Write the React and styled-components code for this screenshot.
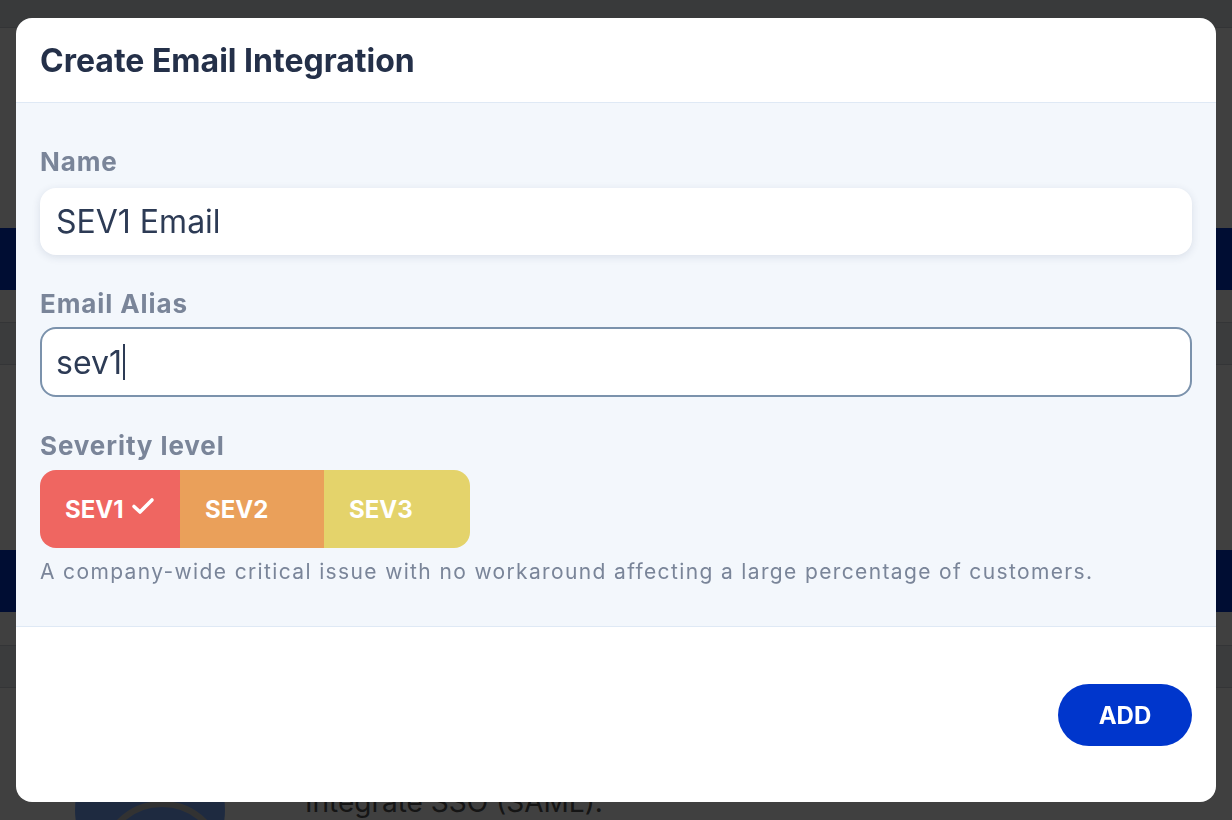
import React from "react";
import styled, { createGlobalStyle } from "styled-components";

const GlobalStyle = createGlobalStyle`
  html, body {
    margin: 0;
    padding: 0;
    height: 100%;
    overflow: hidden;
    font-family: Inter, "Noto Sans", sans-serif;
  }
  * { box-sizing: border-box; }
`;

/* page behind the dialog */
const Page = styled.div`
  width: 100vw;
  height: 100vh;
  background: #ffffff;
  overflow: hidden;
`;

const TopBar = styled.div`
  height: 28px;
  background: #e2e5ea;
  border-bottom: 1px solid #c9ced6;
`;

const Spacer = styled.div`
  height: ${p => p.h}px;
`;

const Band = styled.div`
  height: 62px;
  background: #0036cc;
`;

const RowLine = styled.div`
  height: 43px;
  background: #eceef1;
  border-top: 1px solid #d0d4da;
  border-bottom: 1px solid #d0d4da;
`;

const PromoRow = styled.div`
  display: flex;
  align-items: flex-start;
  gap: 80px;
  padding: 47px 0 0 75px;
`;

const Avatar = styled.div`
  width: 150px;
  height: 150px;
  border-radius: 50%;
  background: #78a8ff;
  flex: 0 0 auto;
  position: relative;
  overflow: hidden;
  &::after {
    content: "";
    position: absolute;
    left: 24px;
    top: 66px;
    width: 114px;
    height: 114px;
    border-radius: 50%;
    border: 6px solid #c8c8c8;
  }
`;

const PromoText = styled.div`
  margin-top: 51px;
  font-size: 28px;
  color: #555555;
  line-height: 32px;
`;

const Overlay = styled.div`
  position: fixed;
  inset: 0;
  background: rgba(0, 0, 0, 0.75);
  display: flex;
  align-items: center;
  justify-content: center;
`;

const Modal = styled.div`
  width: 1200px;
  background: #ffffff;
  border-radius: 16px;
  overflow: hidden;
  display: flex;
  flex-direction: column;
`;

const Header = styled.div`
  height: 85px;
  padding: 0 24px;
  display: flex;
  align-items: center;
  border-bottom: 1px solid #dfe9f5;
`;

const Title = styled.h2`
  margin: 0;
  font-size: 32px;
  font-weight: 700;
  color: #243049;
`;

const Body = styled.div`
  background: #f3f7fc;
  padding: 43px 24px 40px;
  border-bottom: 1px solid #dfe9f5;
  display: flex;
  flex-direction: column;
`;

const Field = styled.div`
  display: flex;
  flex-direction: column;
  margin-bottom: ${p => p.mb || 0}px;
`;

const Label = styled.label`
  font-size: 26px;
  line-height: 32px;
  font-weight: 700;
  letter-spacing: 0.9px;
  color: #7a8599;
  margin-bottom: ${p => p.mb || 9}px;
`;

const Input = styled.div`
  height: ${p => (p.focused ? 70 : 67)}px;
  background: #ffffff;
  border-radius: 16px;
  border: ${p => (p.focused ? "2px solid #7b92ac" : "none")};
  box-shadow: ${p => (p.focused ? "none" : "0 2px 8px rgba(30, 50, 90, 0.12)")};
  display: flex;
  align-items: center;
  padding-left: ${p => (p.focused ? 14 : 16)}px;
  font-size: 32px;
  color: #2d3b55;
`;

const Caret = styled.span`
  display: inline-block;
  width: 2px;
  height: 36px;
  background: #2d3b55;
  margin-left: 1px;
`;

const Segmented = styled.div`
  display: flex;
  align-self: flex-start;
  height: 78px;
  border-radius: 16px;
  overflow: hidden;
`;

const Segment = styled.div`
  background: ${p => p.color};
  width: ${p => p.w}px;
  display: flex;
  align-items: center;
  gap: 6px;
  padding-left: 25px;
  font-size: 24px;
  font-weight: 700;
  color: #ffffff;
`;

const CheckSlot = styled.svg`
  visibility: ${p => (p.show ? "visible" : "hidden")};
  margin-top: -6px;
`;

const Hint = styled.p`
  margin: 10px 0 0;
  font-size: 21px;
  line-height: 28px;
  letter-spacing: 1.36px;
  color: #7a8599;
`;

const Footer = styled.div`
  height: 175px;
  display: flex;
  justify-content: flex-end;
  align-items: flex-start;
  padding: 57px 24px 0;
`;

const AddButton = styled.button`
  width: 134px;
  height: 62px;
  border: none;
  border-radius: 31px;
  background: #0036cc;
  color: #ffffff;
  font-family: inherit;
  font-size: 24px;
  font-weight: 700;
  cursor: pointer;
`;

const severities = [
  { label: "SEV1", color: "#ef6661", w: 140, selected: true },
  { label: "SEV2", color: "#eaa05a", w: 144 },
  { label: "SEV3", color: "#e4d36b", w: 146 },
];

export default function App() {
  return (
    <>
      <GlobalStyle />
      <Page>
        <TopBar />
        <Spacer h={200} />
        <Band />
        <Spacer h={32} />
        <RowLine />
        <Spacer h={185} />
        <Band />
        <Spacer h={33} />
        <RowLine />
        <PromoRow>
          <Avatar />
          <PromoText>Integrate SSO (SAML).</PromoText>
        </PromoRow>
      </Page>

      <Overlay>
        <Modal role="dialog" aria-modal>
          <Header>
            <Title>Create Email Integration</Title>
          </Header>
          <Body>
            <Field mb={33}>
              <Label mb={10}>Name</Label>
              <Input>SEV1 Email</Input>
            </Field>
            <Field mb={33}>
              <Label mb={7}>Email Alias</Label>
              <Input focused>
                sev1
                <Caret />
              </Input>
            </Field>
            <Field>
              <Label mb={8}>Severity level</Label>
              <Segmented>
                {severities.map(s => (
                  <Segment key={s.label} color={s.color} w={s.w}>
                    {s.label}
                    <CheckSlot
                      show={s.selected}
                      width="26"
                      height="22"
                      viewBox="0 0 26 22"
                      fill="none"
                    >
                      <path
                        d="M4 11.5 L10 17 L22 5"
                        stroke="#ffffff"
                        strokeWidth="3.6"
                        strokeLinecap="round"
                        strokeLinejoin="round"
                      />
                    </CheckSlot>
                  </Segment>
                ))}
              </Segmented>
              <Hint>
                A company-wide critical issue with no workaround affecting a
                large percentage of customers.
              </Hint>
            </Field>
          </Body>
          <Footer>
            <AddButton>ADD</AddButton>
          </Footer>
        </Modal>
      </Overlay>
    </>
  );
}
